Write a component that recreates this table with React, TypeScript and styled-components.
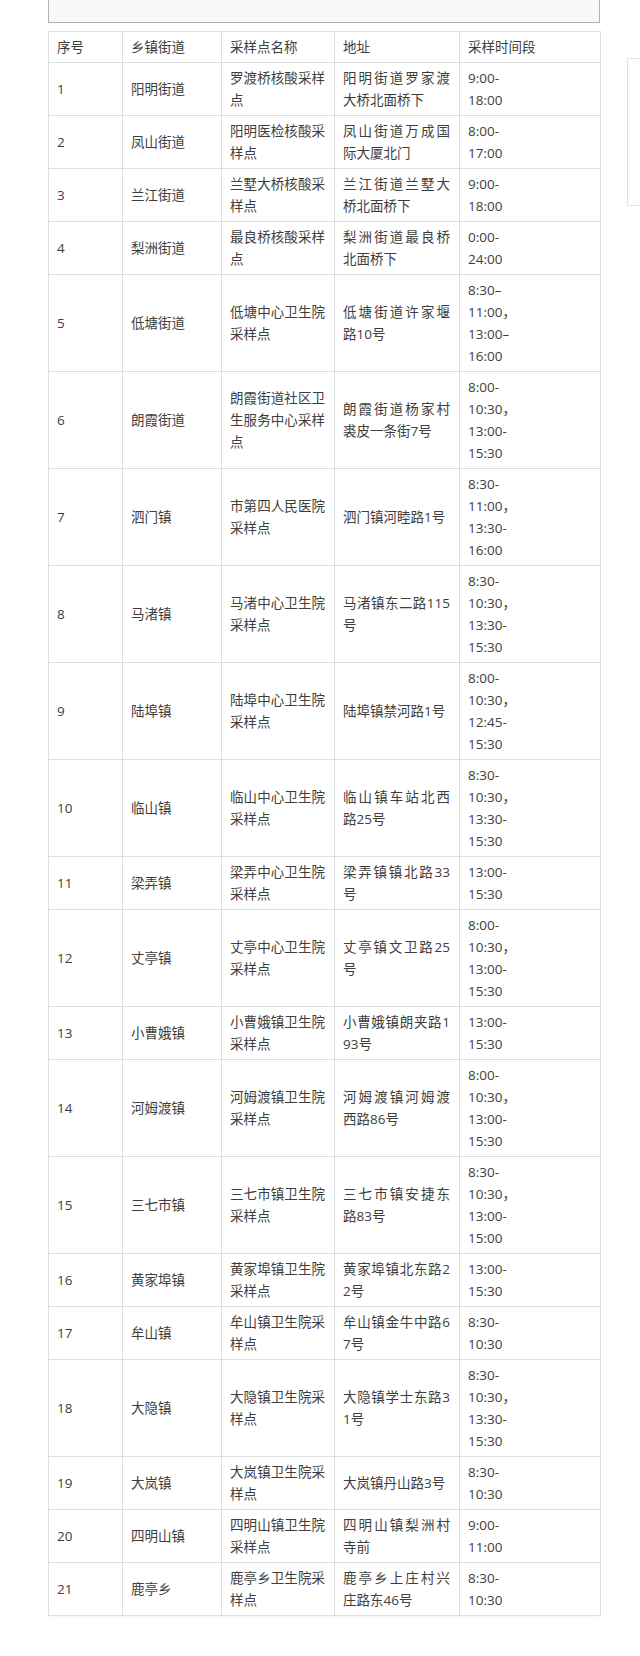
import { FC } from 'react';
import styled, { createGlobalStyle } from 'styled-components';

const GlobalStyle = createGlobalStyle`
  html, body {
    margin: 0;
    padding: 0;
    background: #fff;
  }
  body {
    font-family: 'Open Sans', 'Noto Sans CJK SC', sans-serif;
    color: #3e3e3e;
  }
`;

const Page = styled.div`
  position: relative;
  width: 640px;
  min-height: 1656px;
  padding-left: 48px;
  box-sizing: border-box;
  overflow: hidden;
`;

const TopPanel = styled.div`
  width: 552px;
  height: 23px;
  box-sizing: border-box;
  background: #f9f9f9;
  border: 1px solid #a7b4b7;
  border-top: none;
  margin-bottom: 8px;
`;

const SideTab = styled.div`
  position: absolute;
  top: 58px;
  left: 627px;
  width: 40px;
  height: 148px;
  box-sizing: border-box;
  border: 1px solid #e3e3e3;
  background: #fff;
`;

const Table = styled.table`
  width: 552px;
  table-layout: fixed;
  border-collapse: collapse;
  font-size: 13.5px;
  line-height: 22px;
  box-shadow: 0 5px 2px -3px rgba(0, 0, 0, 0.03);
`;

const Cell = styled.td<{ $justify?: boolean }>`
  border: 1px solid #dddddd;
  padding: 4px 9px 4px 8px;
  vertical-align: middle;
  text-align: ${p => (p.$justify ? 'justify' : 'left')};
  word-break: break-all;
  font-weight: 400;
`;

type Row = {
  town: string;
  site: string;
  address: string;
  times: string[];
};

const rows: Row[] = [
  { town: '阳明街道', site: '罗渡桥核酸采样点', address: '阳明街道罗家渡大桥北面桥下', times: ['9:00-', '18:00'] },
  { town: '凤山街道', site: '阳明医检核酸采样点', address: '凤山街道万成国际大厦北门', times: ['8:00-', '17:00'] },
  { town: '兰江街道', site: '兰墅大桥核酸采样点', address: '兰江街道兰墅大桥北面桥下', times: ['9:00-', '18:00'] },
  { town: '梨洲街道', site: '最良桥核酸采样点', address: '梨洲街道最良桥北面桥下', times: ['0:00-', '24:00'] },
  { town: '低塘街道', site: '低塘中心卫生院采样点', address: '低塘街道许家堰路10号', times: ['8:30–', '11:00，', '13:00–', '16:00'] },
  { town: '朗霞街道', site: '朗霞街道社区卫生服务中心采样点', address: '朗霞街道杨家村裘皮一条街7号', times: ['8:00-', '10:30，', '13:00-', '15:30'] },
  { town: '泗门镇', site: '市第四人民医院采样点', address: '泗门镇河睦路1号', times: ['8:30-', '11:00，', '13:30-', '16:00'] },
  { town: '马渚镇', site: '马渚中心卫生院采样点', address: '马渚镇东二路115号', times: ['8:30-', '10:30，', '13:30-', '15:30'] },
  { town: '陆埠镇', site: '陆埠中心卫生院采样点', address: '陆埠镇禁河路1号', times: ['8:00-', '10:30，', '12:45-', '15:30'] },
  { town: '临山镇', site: '临山中心卫生院采样点', address: '临山镇车站北西路25号', times: ['8:30-', '10:30，', '13:30-', '15:30'] },
  { town: '梁弄镇', site: '梁弄中心卫生院采样点', address: '梁弄镇镇北路33号', times: ['13:00-', '15:30'] },
  { town: '丈亭镇', site: '丈亭中心卫生院采样点', address: '丈亭镇文卫路25号', times: ['8:00-', '10:30，', '13:00-', '15:30'] },
  { town: '小曹娥镇', site: '小曹娥镇卫生院采样点', address: '小曹娥镇朗夹路193号', times: ['13:00-', '15:30'] },
  { town: '河姆渡镇', site: '河姆渡镇卫生院采样点', address: '河姆渡镇河姆渡西路86号', times: ['8:00-', '10:30，', '13:00-', '15:30'] },
  { town: '三七市镇', site: '三七市镇卫生院采样点', address: '三七市镇安捷东路83号', times: ['8:30-', '10:30，', '13:00-', '15:00'] },
  { town: '黄家埠镇', site: '黄家埠镇卫生院采样点', address: '黄家埠镇北东路22号', times: ['13:00-', '15:30'] },
  { town: '牟山镇', site: '牟山镇卫生院采样点', address: '牟山镇金牛中路67号', times: ['8:30-', '10:30'] },
  { town: '大隐镇', site: '大隐镇卫生院采样点', address: '大隐镇学士东路31号', times: ['8:30-', '10:30，', '13:30-', '15:30'] },
  { town: '大岚镇', site: '大岚镇卫生院采样点', address: '大岚镇丹山路3号', times: ['8:30-', '10:30'] },
  { town: '四明山镇', site: '四明山镇卫生院采样点', address: '四明山镇梨洲村寺前', times: ['9:00-', '11:00'] },
  { town: '鹿亭乡', site: '鹿亭乡卫生院采样点', address: '鹿亭乡上庄村兴庄路东46号', times: ['8:30-', '10:30'] },
];

const headers = ['序号', '乡镇街道', '采样点名称', '地址', '采样时间段'];
const widths = [74, 99, 113, 125, 141];

const App: FC = () => (
  <>
    <GlobalStyle />
    <Page>
      <TopPanel />
      <SideTab />
      <Table>
        <colgroup>
          {widths.map((w, i) => (
            <col key={i} style={{ width: w }} />
          ))}
        </colgroup>
        <tbody>
          <tr>
            {headers.map(h => (
              <Cell key={h} as="th">
                {h}
              </Cell>
            ))}
          </tr>
          {rows.map((row, i) => (
            <tr key={row.town}>
              <Cell>{i + 1}</Cell>
              <Cell>{row.town}</Cell>
              <Cell $justify>{row.site}</Cell>
              <Cell $justify>{row.address}</Cell>
              <Cell>
                {row.times.map((t, j) => (
                  <div key={j}>{t}</div>
                ))}
              </Cell>
            </tr>
          ))}
        </tbody>
      </Table>
    </Page>
  </>
);

export default App;
